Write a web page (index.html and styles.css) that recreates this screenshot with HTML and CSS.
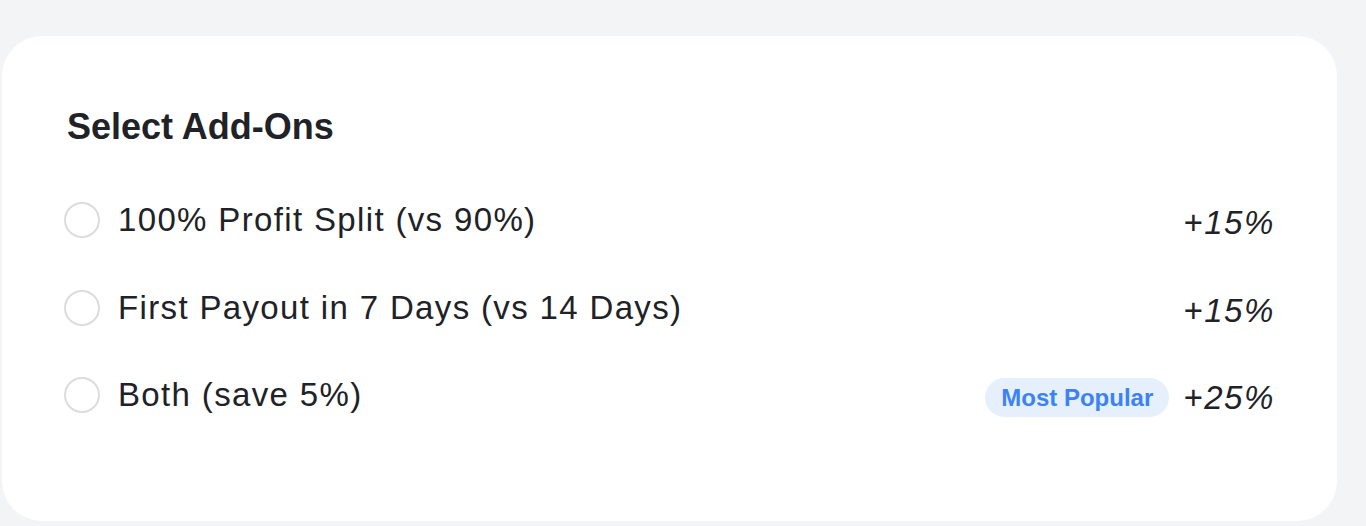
FILE: index.html
```html
<!DOCTYPE html>
<html lang="en">
<head>
<meta charset="utf-8">
<title>Select Add-Ons</title>
<link rel="stylesheet" href="styles.css">
</head>
<body>
  <section class="card">
    <h2 class="title">Select Add-Ons</h2>
    <ul class="options">
      <li class="option">
        <span class="radio"></span>
        <span class="label">100% Profit Split (vs 90%)</span>
        <span class="price">+15%</span>
      </li>
      <li class="option">
        <span class="radio"></span>
        <span class="label">First Payout in 7 Days (vs 14 Days)</span>
        <span class="price">+15%</span>
      </li>
      <li class="option">
        <span class="radio"></span>
        <span class="label">Both (save 5%)</span>
        <span class="badge">Most Popular</span>
        <span class="price">+25%</span>
      </li>
    </ul>
  </section>
</body>
</html>
```

FILE: styles.css
```css
html, body {
  margin: 0;
  padding: 0;
  background: #f3f4f6;
  font-family: "Liberation Sans", Arial, Helvetica, sans-serif;
  color: #202228;
}

body {
  width: 1366px;
  height: 526px;
  overflow: hidden;
}

.card {
  box-sizing: border-box;
  margin: 36px 0 0 2px;
  width: 1335px;
  height: 485px;
  background: #ffffff;
  border-radius: 40px;
  padding: 71px 62px 0 62px;
}

.title {
  margin: 0 0 53px 3px;
  font-size: 36px;
  line-height: 40px;
  font-weight: 700;
  color: #202228;
}

.options {
  list-style: none;
  margin: 0;
  padding: 0;
  display: flex;
  flex-direction: column;
  gap: 47.5px;
}

.option {
  display: flex;
  align-items: center;
  height: 40px;
}

.radio {
  box-sizing: border-box;
  flex: none;
  width: 36px;
  height: 36px;
  border: 2px solid #dcdcdc;
  border-radius: 50%;
  background: #fff;
  margin-right: 18px;
}

.label {
  flex: 1;
  font-size: 33px;
  line-height: 38px;
  letter-spacing: 1.35px;
  color: #202228;
}

.price {
  font-size: 33px;
  line-height: 38px;
  font-style: italic;
  letter-spacing: 1.6px;
  margin-top: 6px;
  color: #202228;
}

.badge {
  margin-top: 5px;
  margin-right: 14px;
  padding: 0 16px;
  height: 39px;
  line-height: 39px;
  border-radius: 20px;
  background: #e6f0fd;
  color: #3b82f6;
  font-size: 24px;
  font-weight: 700;
}
```
